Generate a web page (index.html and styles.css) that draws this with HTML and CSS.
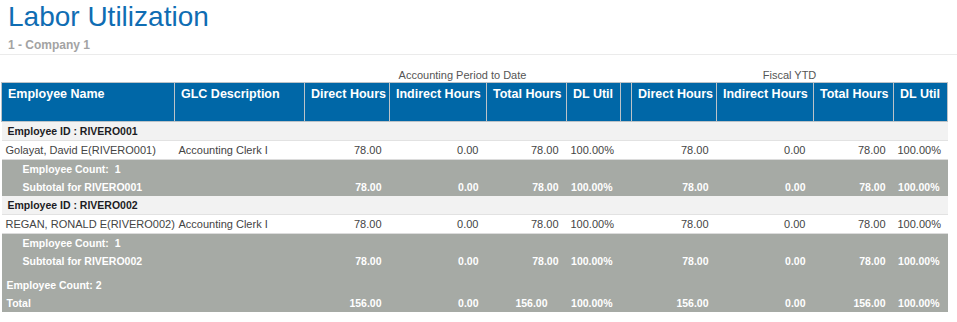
FILE: index.html
```html
<!DOCTYPE html>
<html lang="en">
<head>
<meta charset="utf-8">
<title>Labor Utilization</title>
<link rel="stylesheet" href="styles.css">
</head>
<body>
<header class="page-head">
  <h1 class="title">Labor Utilization</h1>
  <div class="subtitle">1 - Company 1</div>
</header>
<table class="report">
  <colgroup>
    <col class="c-name"><col class="c-glc">
    <col class="c-dir"><col class="c-ind"><col class="c-tot"><col class="c-util">
    <col class="c-gap">
    <col class="c-dir"><col class="c-ind"><col class="c-tot"><col class="c-util">
  </colgroup>
  <thead>
    <tr class="super">
      <td colspan="2"></td>
      <td colspan="4">Accounting Period to Date</td>
      <td></td>
      <td colspan="4">Fiscal YTD</td>
    </tr>
    <tr class="cols">
      <th>Employee Name</th>
      <th>GLC Description</th>
      <th>Direct Hours</th>
      <th>Indirect Hours</th>
      <th>Total Hours</th>
      <th>DL Util</th>
      <th></th>
      <th>Direct Hours</th>
      <th>Indirect Hours</th>
      <th>Total Hours</th>
      <th>DL Util</th>
    </tr>
  </thead>
  <tbody>
    <tr class="group"><td colspan="11">Employee ID : RIVERO001</td></tr>
    <tr class="row">
      <td>Golayat, David E(RIVERO001)</td><td>Accounting Clerk I</td>
      <td class="n">78.00</td><td class="n">0.00</td><td class="n">78.00</td><td class="n">100.00%</td>
      <td></td>
      <td class="n">78.00</td><td class="n">0.00</td><td class="n">78.00</td><td class="n">100.00%</td>
    </tr>
    <tr class="sub"><td colspan="11" class="lbl">Employee Count:&nbsp; 1</td></tr>
    <tr class="sub">
      <td colspan="2" class="lbl">Subtotal for RIVERO001</td>
      <td class="n">78.00</td><td class="n">0.00</td><td class="n">78.00</td><td class="n">100.00%</td>
      <td></td>
      <td class="n">78.00</td><td class="n">0.00</td><td class="n">78.00</td><td class="n">100.00%</td>
    </tr>
    <tr class="group"><td colspan="11">Employee ID : RIVERO002</td></tr>
    <tr class="row">
      <td>REGAN, RONALD E(RIVERO002)</td><td>Accounting Clerk I</td>
      <td class="n">78.00</td><td class="n">0.00</td><td class="n">78.00</td><td class="n">100.00%</td>
      <td></td>
      <td class="n">78.00</td><td class="n">0.00</td><td class="n">78.00</td><td class="n">100.00%</td>
    </tr>
    <tr class="sub"><td colspan="11" class="lbl">Employee Count:&nbsp; 1</td></tr>
    <tr class="sub">
      <td colspan="2" class="lbl">Subtotal for RIVERO002</td>
      <td class="n">78.00</td><td class="n">0.00</td><td class="n">78.00</td><td class="n">100.00%</td>
      <td></td>
      <td class="n">78.00</td><td class="n">0.00</td><td class="n">78.00</td><td class="n">100.00%</td>
    </tr>
    <tr class="sub grand-count"><td colspan="11" class="glbl">Employee Count: 2</td></tr>
    <tr class="sub grand">
      <td colspan="2" class="glbl">Total</td>
      <td class="n">156.00</td><td class="n">0.00</td><td class="n hl"><span class="hl-box">156.00</span></td><td class="n">100.00%</td>
      <td></td>
      <td class="n">156.00</td><td class="n">0.00</td><td class="n">156.00</td><td class="n">100.00%</td>
    </tr>
  </tbody>
</table>
</body>
</html>
```
FILE: styles.css
```css
html, body {
  margin: 0;
  padding: 0;
  background: #ffffff;
  font-family: "Liberation Sans", Arial, sans-serif;
}

.page-head {
  border-bottom: 1px solid #ebebeb;
  padding: 1px 0 2px 8px;
}

.title {
  margin: 0;
  font-size: 28px;
  line-height: 32px;
  font-weight: normal;
  color: #0f6db3;
}

.subtitle {
  margin-top: 5px;
  font-size: 12px;
  line-height: 14px;
  font-weight: bold;
  color: #a3a3a3;
}

.report {
  margin-left: 1px;
  width: 946px;
  table-layout: fixed;
  border-collapse: collapse;
  font-size: 11px;
  color: #444444;
}

.c-name { width: 173px; }
.c-glc  { width: 130px; }
.c-dir  { width: 85px; }
.c-ind  { width: 97px; }
.c-tot  { width: 80px; }
.c-util { width: 54px; }
.c-gap  { width: 11px; }

.report td, .report th {
  padding: 0 4px;
  white-space: nowrap;
  overflow: visible;
}

.super td {
  height: 27px;
  padding: 0;
  vertical-align: bottom;
  text-align: center;
  line-height: 13px;
  color: #555555;
}

.cols th {
  height: 39px;
  box-sizing: border-box;
  background: #0067a7;
  color: #ffffff;
  font-size: 12.5px;
  font-weight: bold;
  text-align: left;
  vertical-align: top;
  line-height: 14px;
  padding: 4px 6px 0;
  border: 1px solid #bcc3c8;
}

.group td {
  background: #f2f2f2;
  height: 18px;
  line-height: 18px;
  padding-left: 6px;
  font-size: 10.5px;
  font-weight: bold;
  color: #1c1c24;
  border-bottom: 1px solid #e2e2e2;
}

.row td {
  height: 18px;
  line-height: 18px;
  border-bottom: 1px solid #dcdcdc;
}

.report td.n {
  text-align: right;
  padding-right: 8px;
}

.sub td {
  background: #a6aaa5;
  color: #ffffff;
  font-weight: bold;
  font-size: 10.5px;
  height: 18px;
  line-height: 18px;
}

.report td.lbl { padding-left: 21px; }
.report td.glbl { padding-left: 5px; }

.grand-count td {
  height: 24px;
  padding-top: 6px;
  box-sizing: border-box;
  vertical-align: bottom;
}

.grand td { height: 18px; }

.report td.hl {
  padding-right: 17px;
}

.hl-box {
  display: inline-block;
  background: #a6aaa5;
  padding: 0 2px 2px 1px;
  margin-bottom: -2px;
  line-height: 18px;
  vertical-align: top;
}
```
